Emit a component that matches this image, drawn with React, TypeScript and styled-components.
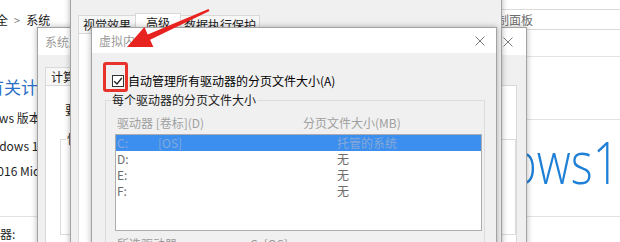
import React from "react";
import styled, { createGlobalStyle } from "styled-components";

const GlobalStyle = createGlobalStyle`
  html, body {
    margin: 0;
    padding: 0;
    background: #fff;
  }
  body {
    font-family: "Noto Sans CJK SC", "Noto Sans", sans-serif;
    font-size: 12px;
    color: #1a1a1a;
  }
  * {
    box-sizing: border-box;
  }
`;

const Desktop = styled.div`
  position: relative;
  width: 620px;
  height: 242px;
  overflow: hidden;
  background: #fff;
`;

/* control panel window, behind the dialogs */

const ControlPanel = styled.div`
  margin-left: -60px;
  width: 680px;
  height: 242px;
  display: flex;
  flex-direction: column;
  background: #fff;
`;

const AddressRow = styled.div`
  display: flex;
  align-items: center;
  height: 21px;
  margin-top: 9px;
  padding-left: 8px;
`;

const Crumbs = styled.div`
  display: flex;
  align-items: center;
  gap: 6px;
  line-height: 16px;
`;

const CrumbSep = styled.span`
  color: #808080;
  font-size: 11px;
`;

const SearchBox = styled.div`
  margin-left: auto;
  width: 168px;
  height: 21px;
  padding-left: 8px;
  border: 1px solid #dadada;
  border-right: none;
  line-height: 19px;
  color: #6d6d6d;
`;

const HelpRow = styled.div`
  display: flex;
  justify-content: flex-end;
  height: 28px;
`;

const HelpStrip = styled.div`
  width: 160px;
  border-bottom: 1px solid #e3e3e3;
`;

const PageHeading = styled.h1`
  margin: 18px 0 0 13px;
  font-size: 17px;
  font-weight: 400;
  line-height: 24px;
  color: #2b6fc6;
  white-space: nowrap;
`;

const SectionHeader = styled.div<{ $top: number }>`
  display: flex;
  align-items: center;
  gap: 6px;
  margin: ${(p) => p.$top}px 0 0 23px;
  line-height: 16px;
  color: #1f1f1f;

  &::after {
    content: "";
    flex: 1;
    margin-top: 3px;
    border-top: 1px solid #e2e2e2;
  }
`;

const SectionBody = styled.div`
  display: flex;
  height: 84px;
`;

const InfoList = styled.div`
  flex: none;
  width: 461px;
  padding: 7px 0 0 38px;
  line-height: 25px;
  color: #1f1f1f;
  white-space: nowrap;
`;

const InfoLine = styled.div<{ $top?: number }>`
  margin: ${(p) => p.$top ?? 0}px 0 0 36px;
  line-height: 16px;
  color: #1f1f1f;
  white-space: nowrap;
`;

const WinLogo = styled.div`
  margin-top: 17px;
  height: 47px;
  font-family: "Open Sans", "Noto Sans", sans-serif;
  font-weight: 300;
  font-size: 47px;
  line-height: 47px;
  color: #1e7fd6;
  white-space: nowrap;
  transform: scaleY(1.25);
  transform-origin: 0 42px;
`;

/* dialogs */

const Dialog = styled.div<{ $x: number; $y: number; $w: number; $h: number }>`
  position: absolute;
  isolation: isolate;
  left: ${(p) => p.$x}px;
  top: ${(p) => p.$y}px;
  width: ${(p) => p.$w}px;
  height: ${(p) => p.$h}px;
  display: flex;
  flex-direction: column;
  background: #f0f0f0;
  border: 1px solid #a3a3a3;
  box-shadow: 0 0 6px rgba(0, 0, 0, 0.3);
`;

const TitleBar = styled.div<{ $h: number; $pr: number }>`
  flex: none;
  height: ${(p) => p.$h}px;
  display: flex;
  align-items: center;
  justify-content: space-between;
  padding: 0 ${(p) => p.$pr}px 0 7px;
  background: #fff;
  color: #9a9a9a;
  white-space: nowrap;
`;

const DialogBody = styled.div<{ $pad: string }>`
  flex: 1;
  min-height: 0;
  display: flex;
  flex-direction: column;
  padding: ${(p) => p.$pad};
`;

const TabStrip = styled.div`
  position: relative;
  z-index: 1;
  display: flex;
  align-items: flex-end;
  margin-bottom: -1px;
`;

const Tab = styled.div<{ $active?: boolean; $pad: number }>`
  height: ${(p) => (p.$active ? 21 : 19)}px;
  padding: 0 ${(p) => p.$pad}px;
  line-height: 17px;
  border: 1px solid #d9d9d9;
  border-bottom-color: ${(p) => (p.$active ? "#fff" : "#d9d9d9")};
  background: ${(p) => (p.$active ? "#fff" : "#f7f7f7")};
  color: #1a1a1a;
  white-space: nowrap;

  & + & {
    margin-left: -1px;
  }
`;

const TabPage = styled.div`
  flex: 1;
  display: flex;
  flex-direction: column;
  background: #fff;
  border: 1px solid #d9d9d9;
`;

const PageNote = styled.div`
  margin: 16px 0 0 19px;
  line-height: 16px;
  white-space: nowrap;
`;

const GroupBox = styled.div<{ $top: number; $left: number; $h?: number }>`
  display: flex;
  flex-direction: column;
  margin: ${(p) => p.$top}px 0 0 ${(p) => p.$left}px;
  height: ${(p) => (p.$h ? `${p.$h}px` : "auto")};
  border: 1px solid #dcdcdc;
`;

const Legend = styled.div<{ $bg: string }>`
  align-self: flex-start;
  margin: -9px 0 0 5px;
  padding: 0 1px;
  line-height: 16px;
  background: ${(p) => p.$bg};
  color: #1a1a1a;
  white-space: nowrap;
`;

const CheckRow = styled.label`
  display: flex;
  align-items: center;
  gap: 4px;
  margin-left: 7px;
  line-height: 16px;
  color: #000;
  white-space: nowrap;
`;

const CheckBox = styled.span`
  flex: none;
  width: 12px;
  height: 12px;
  display: flex;
  align-items: center;
  justify-content: center;
  background: #fff;
  border: 1px solid #333;
`;

const ColumnHeads = styled.div`
  display: grid;
  grid-template-columns: 186px 1fr;
  margin-top: 7px;
  padding-left: 11px;
  line-height: 16px;
  color: #a0a0a0;
  white-space: nowrap;
`;

const ListBox = styled.div`
  height: 97px;
  margin: 3px 2px 0 9px;
  background: #fff;
  border: 1px solid #adadad;
`;

const ListRow = styled.div<{ $selected?: boolean }>`
  display: grid;
  grid-template-columns: 41px 179px 1fr;
  height: 16px;
  padding-left: 1px;
  line-height: 16px;
  background: ${(p) => (p.$selected ? "#3c8fef" : "transparent")};
  color: ${(p) => (p.$selected ? "#86a9d8" : "#6d6d6d")};
  white-space: nowrap;
`;

const SelectedDrive = styled.div`
  display: grid;
  grid-template-columns: 133px 1fr;
  margin: 5px 0 0 11px;
  line-height: 16px;
  color: #9a9a9a;
  white-space: nowrap;
`;

/* annotation drawn over the screenshot */

const Highlight = styled.div`
  position: absolute;
  left: 103px;
  top: 62px;
  width: 25px;
  height: 30px;
  border: 3px solid #e8322c;
  border-radius: 3px;
`;

const ArrowLayer = styled.svg`
  position: absolute;
  left: 0;
  top: 0;
  width: 620px;
  height: 242px;
  pointer-events: none;
`;

const CloseIcon = () => (
  <svg width="10" height="10" viewBox="0 0 10 10">
    <path d="M0.5 0.5L9.5 9.5M9.5 0.5L0.5 9.5" stroke="#7a7a7a" strokeWidth="1" />
  </svg>
);

const drives = [
  { letter: "C:", label: "[OS]", size: "托管的系统" },
  { letter: "D:", label: "", size: "无" },
  { letter: "E:", label: "", size: "无" },
  { letter: "F:", label: "", size: "无" },
];

export default function App() {
  return (
    <Desktop>
      <GlobalStyle />

      <ControlPanel>
        <AddressRow>
          <Crumbs>
            <span>系统和安全</span>
            <CrumbSep>&gt;</CrumbSep>
            <span>系统</span>
          </Crumbs>
          <SearchBox>搜索控制面板</SearchBox>
        </AddressRow>
        <HelpRow>
          <HelpStrip />
        </HelpRow>
        <PageHeading>查看有关计算机的基本信息</PageHeading>
        <SectionHeader $top={11}>Windows 版本</SectionHeader>
        <SectionBody>
          <InfoList>
            <div>Windows 10 家庭中文版</div>
            <div>© 2016 Microsoft Corporation。保留所有权利。</div>
          </InfoList>
          <WinLogo>Windows10</WinLogo>
        </SectionBody>
        <SectionHeader $top={0}>系统</SectionHeader>
        <InfoLine $top={3}>处理器:</InfoLine>
      </ControlPanel>

      <Dialog $x={37} $y={27} $w={490} $h={240}>
        <TitleBar $h={27} $pr={13}>
          <span>系统属性</span>
          <CloseIcon />
        </TitleBar>
        <DialogBody $pad="10px 9px 0 7px">
          <TabStrip>
            <Tab $pad={5}>计算机名</Tab>
            <Tab $pad={5}>硬件</Tab>
            <Tab $pad={5} $active>
              高级
            </Tab>
            <Tab $pad={5}>系统保护</Tab>
            <Tab $pad={5}>远程</Tab>
          </TabStrip>
          <TabPage>
            <PageNote>要进行大多数更改，你必须作为管理员登录。</PageNote>
            <GroupBox $top={21} $left={14} $h={96}>
              <Legend $bg="#fff">性能</Legend>
            </GroupBox>
          </TabPage>
        </DialogBody>
      </Dialog>

      <Dialog $x={70} $y={-40} $w={432} $h={300}>
        <TitleBar $h={27} $pr={12}>
          <span>性能选项</span>
          <CloseIcon />
        </TitleBar>
        <DialogBody $pad="25px 7px 0 7px">
          <TabStrip>
            <Tab $pad={4}>视觉效果</Tab>
            <Tab $pad={10} $active>
              高级
            </Tab>
            <Tab $pad={3}>数据执行保护</Tab>
          </TabStrip>
          <TabPage />
        </DialogBody>
      </Dialog>

      <Dialog $x={91} $y={27} $w={406} $h={240}>
        <TitleBar $h={25} $pr={11}>
          <span>虚拟内存</span>
          <CloseIcon />
        </TitleBar>
        <DialogBody $pad="20px 11px 0 13px">
          <CheckRow>
            <CheckBox>
              <svg width="10" height="10" viewBox="0 0 10 10">
                <path d="M1.2 5.2L4 8L8.8 2" fill="none" stroke="#222" strokeWidth="1.3" />
              </svg>
            </CheckBox>
            自动管理所有驱动器的分页文件大小(A)
          </CheckRow>
          <GroupBox $top={11} $left={0}>
            <Legend $bg="#f0f0f0">每个驱动器的分页文件大小</Legend>
            <ColumnHeads>
              <span>驱动器 [卷标](D)</span>
              <span>分页文件大小(MB)</span>
            </ColumnHeads>
            <ListBox>
              {drives.map((d, i) => (
                <ListRow key={d.letter} $selected={i === 0}>
                  <span>{d.letter}</span>
                  <span>{d.label}</span>
                  <span>{d.size}</span>
                </ListRow>
              ))}
            </ListBox>
            <SelectedDrive>
              <span>所选驱动器:</span>
              <span>C:  [OS]</span>
            </SelectedDrive>
          </GroupBox>
        </DialogBody>
      </Dialog>

      <Highlight />
      <ArrowLayer viewBox="0 0 620 242">
        <polygon
          points="127,47 144.4,27.1 147.7,34.4 208.5,8.9 209.5,11.1 150.1,39.8 153.4,47.1"
          fill="#e8231f"
        />
      </ArrowLayer>
    </Desktop>
  );
}
